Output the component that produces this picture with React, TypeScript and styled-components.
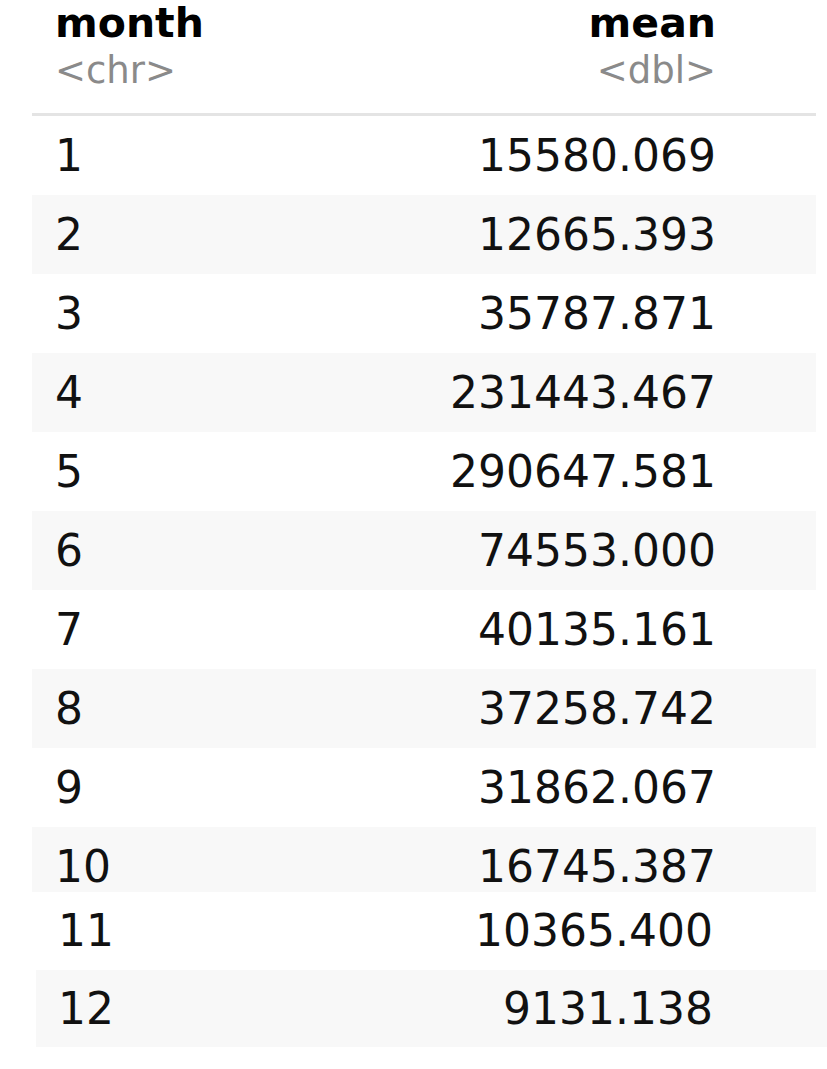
import React from "react";
import styled, { createGlobalStyle } from "styled-components";

const GlobalStyle = createGlobalStyle`
  body {
    margin: 0;
    background: #ffffff;
    font-family: "DejaVu Sans", "Liberation Sans", sans-serif;
    color: #111111;
  }
`;

const Page = styled.div`
  width: 827px;
  height: 1069px;
  overflow: hidden;
  background: #ffffff;
`;

const Table = styled.div`
  margin-left: 32px;
  width: 784px;
`;

const Header = styled.div`
  display: grid;
  grid-template-columns: 1fr auto;
  height: 116px;
  padding: 1px 100px 0 23px;
  border-bottom: 3px solid #e4e4e4;
  box-sizing: border-box;
`;

const HeadCell = styled.div<{ $right?: boolean }>`
  display: flex;
  flex-direction: column;
  align-items: ${(p) => (p.$right ? "flex-end" : "flex-start")};
`;

const ColName = styled.div`
  font-size: 41px;
  font-weight: 700;
  line-height: 45px;
  color: #000000;
`;

const ColType = styled.div`
  font-size: 37px;
  line-height: 44px;
  margin-top: 3px;
  color: #8a8a8a;
`;

const Row = styled.div<{ $striped: boolean; $height: number }>`
  display: grid;
  grid-template-columns: 1fr auto;
  height: ${(p) => p.$height}px;
  overflow: hidden;
  padding: 1px 100px 0 23px;
  box-sizing: border-box;
  background: ${(p) => (p.$striped ? "#f8f8f8" : "#ffffff")};
  font-size: 44px;
  line-height: 78px;
`;

const Tail = styled.div`
  margin-left: 36px;
  width: 791px;
`;

const TailRow = styled(Row)`
  padding: 0 114px 0 22px;
`;

const Num = styled.div`
  text-align: right;
`;

const rows: [string, string][] = [
  ["1", "15580.069"],
  ["2", "12665.393"],
  ["3", "35787.871"],
  ["4", "231443.467"],
  ["5", "290647.581"],
  ["6", "74553.000"],
  ["7", "40135.161"],
  ["8", "37258.742"],
  ["9", "31862.067"],
  ["10", "16745.387"],
];

const tail: [string, string][] = [
  ["11", "10365.400"],
  ["12", "9131.138"],
];

export default function App() {
  return (
    <Page>
      <GlobalStyle />
      <Table>
        <Header>
          <HeadCell>
            <ColName>month</ColName>
            <ColType>&lt;chr&gt;</ColType>
          </HeadCell>
          <HeadCell $right>
            <ColName>mean</ColName>
            <ColType>&lt;dbl&gt;</ColType>
          </HeadCell>
        </Header>
        {rows.map(([month, mean], i) => (
          <Row
            key={month}
            $striped={i % 2 === 1}
            $height={i === rows.length - 1 ? 65 : 79}
          >
            <div>{month}</div>
            <Num>{mean}</Num>
          </Row>
        ))}
      </Table>
      <Tail>
        {tail.map(([month, mean], i) => (
          <TailRow key={month} $striped={i % 2 === 1} $height={i === 0 ? 78 : 77}>
            <div>{month}</div>
            <Num>{mean}</Num>
          </TailRow>
        ))}
      </Tail>
    </Page>
  );
}
